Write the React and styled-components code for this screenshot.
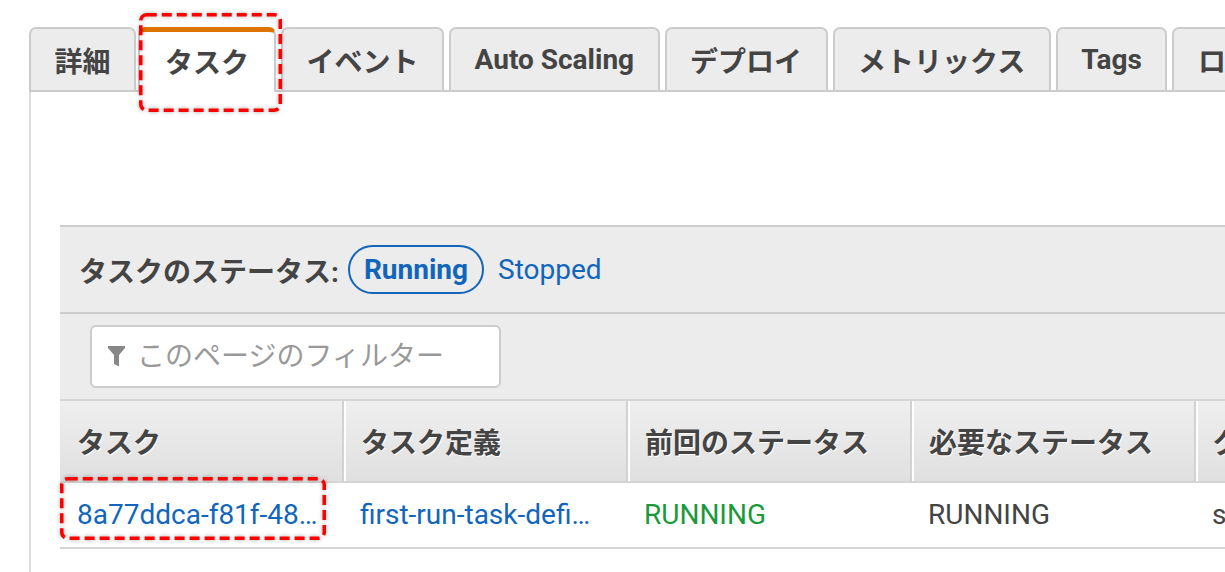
import React from 'react';
import styled, { createGlobalStyle, css } from 'styled-components';

const GlobalStyle = createGlobalStyle`
  html, body { margin: 0; padding: 0; background: #fff; }
  body {
    font-family: Roboto, "Noto Sans CJK JP", "Noto Sans", sans-serif;
    color: #444;
  }
  * { box-sizing: border-box; }
`;

const Viewport = styled.div`
  width: 1225px;
  height: 572px;
  overflow: hidden;
  padding: 27px 0 0 29px;
`;

const Console = styled.div`
  width: 1500px;
`;

const TabBar = styled.div`
  display: flex;
  align-items: flex-end;
  gap: 5px;
  height: 65px;
  border-bottom: 2px solid #ccc;
`;

const Tab = styled.div`
  position: relative;
  height: 63px;
  padding: 0 23.5px;
  display: flex;
  align-items: center;
  justify-content: center;
  white-space: nowrap;
  font-size: 28px;
  font-weight: 700;
  color: #444;
  background: #ececec;
  border: 2px solid #ccc;
  border-bottom: none;
  border-radius: 7px 7px 0 0;
  ${p => p.$active && css`
    background: #fff;
    border-top: 5px solid #dd7400;
    height: 65px;
    margin: 0 0 -2px -3px;
    padding: 0 25px 2px;
  `}
`;

const Callout = styled.svg`
  position: absolute;
  left: ${p => p.$left}px;
  top: ${p => p.$top}px;
  overflow: visible;
  pointer-events: none;
  z-index: 5;
  filter: drop-shadow(0 0 2px rgba(0, 0, 0, 0.35));
`;

const Panel = styled.div`
  border-left: 2px solid #ddd;
  padding: 133px 0 0 29px;
  height: 500px;
`;

const Card = styled.div`
  background: #ececec;
  border-top: 2px solid #ccc;
`;

const StatusRow = styled.div`
  display: flex;
  align-items: center;
  height: 87px;
  padding-left: 19px;
  border-bottom: 2px solid #ccc;
  font-size: 28px;
`;

const StatusLabel = styled.span`
  font-weight: 700;
  color: #444;
  margin-right: 9px;
`;

const StatusOption = styled.span`
  color: #1166bb;
  height: 49px;
  display: inline-flex;
  align-items: center;
  padding: 0 12px;
  border-radius: 25px;
  border: 2px solid transparent;
  ${p => p.$selected && css`
    font-weight: 700;
    padding: 0 14px;
    border-color: #1166bb;
  `}
`;

const FilterRow = styled.div`
  padding: 11px 30px;
`;

const FilterBox = styled.label`
  width: 411px;
  height: 63px;
  display: flex;
  align-items: center;
  gap: 12px;
  padding-left: 16px;
  background: #fff;
  border: 2px solid #ccc;
  border-radius: 6px;
`;

const FilterInput = styled.input`
  flex: 1;
  min-width: 0;
  border: none;
  outline: none;
  background: transparent;
  font: inherit;
  font-size: 28px;
  color: #444;
  padding: 0;
  &::placeholder { color: #999; }
`;

const Grid = styled.div`
  display: grid;
  grid-template-columns: repeat(5, 284px);
`;

const HeadCell = styled.div`
  height: 84px;
  display: flex;
  align-items: center;
  padding: 0 17px;
  white-space: nowrap;
  overflow: hidden;
  background: linear-gradient(#efefef, #e0e0e0);
  border-top: 2px solid #d5d5d5;
  border-bottom: 2px solid #d5d5d5;
  border-right: 2px solid #d2d2d2;
  box-shadow: ${p => (p.$first ? 'none' : 'inset 2px 0 0 #fff')};
  font-size: 28px;
  font-weight: 700;
  color: #444;
  text-shadow: 1px 1px 0 #fff;
`;

const BodyCell = styled.div`
  position: relative;
  height: 66px;
  background: #fff;
  border-bottom: 2px solid #d5d5d5;
  padding: 0 ${p => (p.$first ? 18 : 24)}px 0 ${p => (p.$first ? 17 : 16)}px;
`;

const CellText = styled.div`
  line-height: 64px;
  font-size: 28px;
  white-space: nowrap;
  overflow: hidden;
  text-overflow: ellipsis;
  color: ${p => ({ link: '#1166bb', ok: '#1a9a3a' }[p.$tone] || '#444')};
`;

const Funnel = () => (
  <svg width="17" height="21" viewBox="0 0 17 21" aria-hidden="true">
    <path d="M0 0 H17 V2 L11 9 V20.5 L6 18 V9 L0 2 Z" fill="#888" />
  </svg>
);

const DashedFrame = ({ left, top, w, h }) => (
  <Callout $left={left} $top={top} width={w} height={h}>
    <rect
      x="1.75"
      y="1.75"
      width={w - 3.5}
      height={h - 3.5}
      rx="6"
      fill="none"
      stroke="#ff0000"
      strokeWidth="3.5"
      strokeDasharray="10 5"
    />
  </Callout>
);

const tabs = ['詳細', 'タスク', 'イベント', 'Auto Scaling', 'デプロイ', 'メトリックス', 'Tags', 'ログ'];

const columns = ['タスク', 'タスク定義', '前回のステータス', '必要なステータス', 'グループ'];

const row = [
  { text: '8a77ddca-f81f-4854-a2d7-6e4c9f0b1a3e', tone: 'link', marked: true },
  { text: 'first-run-task-definition:1', tone: 'link' },
  { text: 'RUNNING', tone: 'ok' },
  { text: 'RUNNING' },
  { text: 'service:sample-app-service' },
];

export default function App() {
  return (
    <>
      <GlobalStyle />
      <Viewport>
        <Console>
          <TabBar>
            {tabs.map((t, i) => (
              <Tab key={t} $active={i === 1}>
                {t}
                {i === 1 && <DashedFrame left={-1} top={-19} w={143} h={99} />}
              </Tab>
            ))}
          </TabBar>
          <Panel>
            <Card>
              <StatusRow>
                <StatusLabel>タスクのステータス:</StatusLabel>
                <StatusOption $selected>Running</StatusOption>
                <StatusOption>Stopped</StatusOption>
              </StatusRow>
              <FilterRow>
                <FilterBox>
                  <Funnel />
                  <FilterInput placeholder="このページのフィルター" />
                </FilterBox>
              </FilterRow>
              <Grid>
                {columns.map((c, i) => (
                  <HeadCell key={c} $first={i === 0}>{c}</HeadCell>
                ))}
                {row.map((cell, i) => (
                  <BodyCell key={i} $first={i === 0}>
                    <CellText $tone={cell.tone}>{cell.text}</CellText>
                    {cell.marked && <DashedFrame left={0} top={-6} w={266} h={63} />}
                  </BodyCell>
                ))}
              </Grid>
            </Card>
          </Panel>
        </Console>
      </Viewport>
    </>
  );
}
